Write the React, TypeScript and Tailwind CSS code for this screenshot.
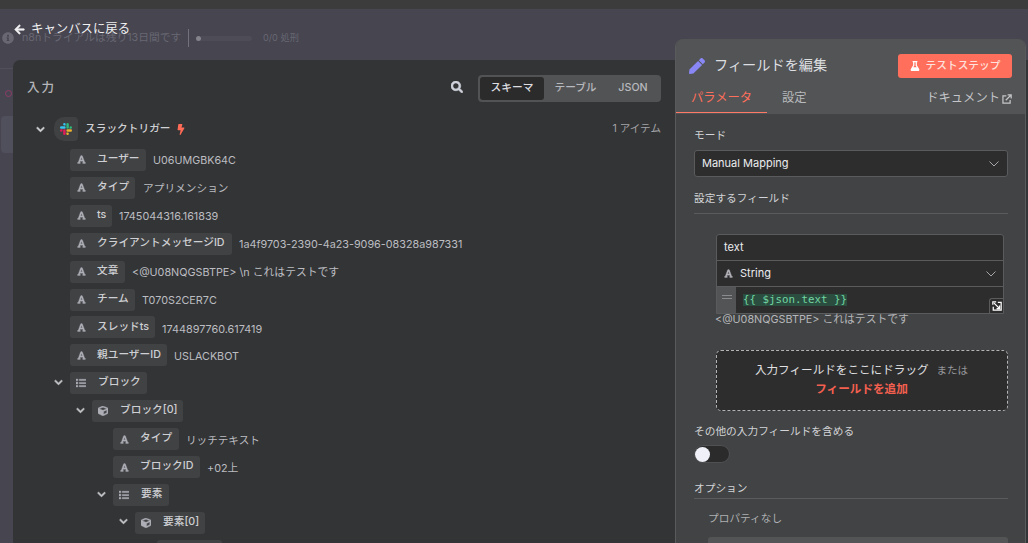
import { useState } from "react";
import {
  FaArrowLeft,
  FaBolt,
  FaChevronDown,
  FaCube,
  FaFlask,
  FaFont,
  FaInfoCircle,
  FaList,
  FaPen,
  FaSearch,
} from "react-icons/fa";

type Kind = "string" | "list" | "object";

interface SchemaRow {
  kind: Kind;
  label: string;
  value?: string;
  indent: string;
  chip: string;
  text?: string;
}

const icons = { string: FaFont, list: FaList, object: FaCube };

const rows: SchemaRow[] = [
  { kind: "string", label: "ユーザー", value: "U06UMGBK64C", indent: "pl-[57px]", chip: "w-[76px]", text: "text-[10.75px]" },
  { kind: "string", label: "タイプ", value: "アプリメンション", indent: "pl-[57px]", chip: "w-[65px]", text: "text-[10.7px] ml-px" },
  { kind: "string", label: "ts", value: "1745044316.161839", indent: "pl-[57px]", chip: "w-[42px]", text: "text-[10.8px]" },
  { kind: "string", label: "クライアントメッセージID", value: "1a4f9703-2390-4a23-9096-08328a987331", indent: "pl-[57px]", chip: "w-[162px]", text: "text-[10.8px]" },
  { kind: "string", label: "文章", value: "<@U08NQGSBTPE> \\n これはテストです", indent: "pl-[57px]", chip: "w-[55px]", text: "text-[10.8px]" },
  { kind: "string", label: "チーム", value: "T070S2CER7C", indent: "pl-[57px]", chip: "w-[65px]", text: "text-[10.8px]" },
  { kind: "string", label: "スレッドts", value: "1744897760.617419", indent: "pl-[57px]", chip: "w-[85px]", text: "text-[10.85px]" },
  { kind: "string", label: "親ユーザーID", value: "USLACKBOT", indent: "pl-[57px]", chip: "w-[97px]", text: "text-[10.75px]" },
  { kind: "list", label: "ブロック", indent: "pl-[41px]", chip: "w-[77px]" },
  { kind: "object", label: "ブロック[0]", indent: "pl-[63px]", chip: "w-[91px]" },
  { kind: "string", label: "タイプ", value: "リッチテキスト", indent: "pl-[100px]", chip: "w-[66px]", text: "text-[10.6px]" },
  { kind: "string", label: "ブロックID", value: "+02上", indent: "pl-[100px]", chip: "w-[87px]", text: "text-[10.8px]" },
  { kind: "list", label: "要素", indent: "pl-[84px]", chip: "w-[56px]" },
  { kind: "object", label: "要素[0]", indent: "pl-[106px]", chip: "w-[70px]" },
  { kind: "string", label: "", indent: "pl-[144px]", chip: "w-[65px]" },
];

const SchemaItem = ({ row }: { row: SchemaRow }) => {
  const Icon = icons[row.kind];
  return (
    <div className={`flex h-[27.93px] shrink-0 items-center ${row.indent}`}>
      {row.kind !== "string" && (
        <FaChevronDown
          strokeWidth={35}
          className="mr-[7px] mb-[2px] size-[9px] shrink-0 text-[#c4c5c9]"
        />
      )}
      <div
        className={`flex h-[22px] shrink-0 items-center rounded-[3px] bg-[#414244] pl-[6px] ${row.chip}`}
      >
        <Icon
          strokeWidth={18}
          className={`shrink-0 text-[#adaeb6] ${
            row.kind === "string" ? "mx-[0.5px] size-[9px]" : "size-[10px]"
          }`}
        />
        <span
          className={`pb-[1px] text-[10.7px] leading-none font-medium text-[#cfd0d3] ${
            row.kind === "string" ? "ml-[11px]" : "ml-[12px]"
          }`}
        >
          {row.label}
        </span>
      </div>
      {row.value && (
        <span className={`pt-[3px] pl-[7px] text-[#bcbdc2] ${row.text}`}>{row.value}</span>
      )}
    </div>
  );
};

const Backdrop = () => (
  <>
    <div className="absolute top-[29px] left-[2px] flex h-[18px] items-center text-[#686772]">
      <FaInfoCircle className="size-[12px]" />
      <span className="ml-[8px] w-[159px] text-[10.75px]">n8nトライアルは残り13日間です</span>
      <span className="ml-[7px] h-[18px] w-px bg-[#73727c]" />
      <span className="ml-[7px] size-[5px] rounded-full bg-[#85848d]" />
      <span className="h-[5px] w-[51px] rounded-r-full bg-[#4d4c57]" />
      <span className="ml-[11px] text-[9.2px]">0/0 処刑</span>
    </div>
    <div className="absolute top-[68px] left-0 h-px w-[13px] bg-[#514f5b]" />
    <div className="absolute top-[90px] left-[5px] size-[7px] rounded-full border border-[#8e3c68]" />
    <div className="absolute top-[116px] left-[1px] h-[37px] w-[12px] rounded-l-[4px] bg-[#504f5c]" />
  </>
);

const SlackIcon = () => (
  <svg viewBox="0 0 24 24" className="size-[12px]">
    <path fill="#36c5f0" d="M8.8 0a2.5 2.5 0 1 0 0 5h2.5V2.5A2.5 2.5 0 0 0 8.8 0zM8.8 6.3H2.5a2.5 2.5 0 0 0 0 5h6.3a2.5 2.5 0 0 0 0-5z" />
    <path fill="#2eb67d" d="M24 8.8a2.5 2.5 0 0 0-5 0v2.5h2.5A2.5 2.5 0 0 0 24 8.8zM17.7 8.8V2.5a2.5 2.5 0 0 0-5 0v6.3a2.5 2.5 0 0 0 5 0z" />
    <path fill="#ecb22e" d="M15.2 24a2.5 2.5 0 0 0 0-5h-2.5v2.5a2.5 2.5 0 0 0 2.5 2.5zM15.2 17.7h6.3a2.5 2.5 0 0 0 0-5h-6.3a2.5 2.5 0 0 0 0 5z" />
    <path fill="#e01e5a" d="M0 15.2a2.5 2.5 0 0 0 5 0v-2.5H2.5A2.5 2.5 0 0 0 0 15.2zM6.3 15.2v6.3a2.5 2.5 0 0 0 5 0v-6.3a2.5 2.5 0 0 0-5 0z" />
  </svg>
);

const ExternalIcon = () => (
  <svg
    viewBox="0 0 16 16"
    className="mt-px size-[10px]"
    fill="none"
    stroke="currentColor"
    strokeWidth="2"
  >
    <path d="M7 3H1.500v11.500H13V9.500M9 1.300h5.700V7M14.500 1.500L6 10" />
  </svg>
);

const ExpandIcon = () => (
  <svg viewBox="0 0 12 12" className="size-[10px]" fill="none" stroke="#fff" strokeWidth="1.5">
    <path d="M2.500 2.500l6 6M1 4.500V1h4M5.500 9h3.500V5.500M7 1.500h4v9.500H1.500V7" />
  </svg>
);

const SelectArrow = () => (
  <svg viewBox="0 0 12 12" className="ml-auto size-[12px]" fill="none" stroke="#a5a6aa">
    <path d="M1.500 3.500L6 8l4.500-4.500" />
  </svg>
);

const InputPanel = () => {
  const [view, setView] = useState("スキーマ");
  const views = [
    { name: "スキーマ", width: "w-[64px]" },
    { name: "テーブル", width: "w-[63px]" },
    { name: "JSON", width: "w-[52px]" },
  ];

  return (
    <section className="mt-[20px] flex h-[483px] w-[663px] shrink-0 flex-col overflow-hidden rounded-tl-[7px] bg-[#333435]">
      <div className="flex h-[55px] shrink-0 items-center pt-px pr-[15px] pl-[14px]">
        <h2 className="text-[12.5px] font-medium tracking-[2px] text-[#b5b6ba]">入力</h2>
        <FaSearch
          strokeWidth={25}
          className="mr-[15px] mb-[2px] ml-auto size-[12px] text-[#d0d3db]"
        />
        <div className="flex h-[27px] w-[183px] items-center rounded-[4px] bg-[#525355] px-[2px]">
          {views.map(({ name, width }) => (
            <button
              key={name}
              onClick={() => setView(name)}
              className={`h-[23px] rounded-[3px] text-[10.7px] font-medium ${width} ${
                view === name ? "bg-[#2b2b2c] text-[#dedee1]" : "text-[#b8b9bd]"
              }`}
            >
              {name}
            </button>
          ))}
        </div>
      </div>
      <div className="flex h-[31px] shrink-0 items-center pr-[15px] pb-[3px] pl-[23px]">
        <FaChevronDown strokeWidth={35} className="size-[9px] text-[#d3d4d8]" />
        <div className="ml-[9px] flex size-[24px] items-center justify-center rounded-[4px] rounded-l-[10px] bg-[#404142]">
          <SlackIcon />
        </div>
        <span className="ml-[7px] text-[10.7px] font-medium text-[#d0d1d4]">スラックトリガー</span>
        <FaBolt className="ml-[6px] h-[11px] w-[8px] text-[#ff6b57]" />
        <span className="ml-auto text-[10.6px] text-[#a3a4a8]">1 アイテム</span>
      </div>
      {rows.map((row, index) => (
        <SchemaItem key={`row-${index}`} row={row} />
      ))}
    </section>
  );
};

const FieldPanel = () => {
  const [isOn, setIsOn] = useState(false);

  return (
    <section className="-mt-px flex h-[505px] w-[351px] shrink-0 flex-col overflow-hidden rounded-t-[8px] border-x border-[#585a5c] bg-[#414344] text-[#d3d4d7]">
      <div className="flex h-[75px] shrink-0 flex-col bg-[#525455]">
        <div className="flex h-[51px] items-center px-[13px] pt-[3px]">
          <FaPen className="size-[16px] text-[#8987f5]" />
          <h1 className="ml-[9px] pb-[3px] text-[14.2px] text-[#dddee0]">フィールドを編集</h1>
          <button className="ml-auto flex h-[24px] w-[114px] items-center justify-center gap-[6px] rounded-[3px] bg-[#ff6f5c] text-[10.7px] font-medium text-[#ffe2dd]">
            <FaFlask className="size-[10px] text-white" />
            テストステップ
          </button>
        </div>
        <div className="flex h-[24px] text-[12.3px]">
          <span className="flex h-[23px] w-[91px] justify-center border-b border-[#ff7a66] leading-[16px] text-[#ff6f5c]">
            パラメータ
          </span>
          <span className="ml-[15px] leading-[16px] text-[#b8b9bc]">設定</span>
          <span className="mr-[13px] ml-auto flex h-[16px] items-center gap-[2px] text-[#c4c5c8]">
            ドキュメント
            <ExternalIcon />
          </span>
        </div>
      </div>
      <div className="flex flex-col pr-[17px] pl-[18px] text-[10.7px]">
        <label className="mt-[13px] h-[16px] leading-[18px]">モード</label>
        <div className="mt-[7px] flex h-[27px] items-center rounded-[3px] border border-[#5a5b5d] bg-[#2d2d2e] pr-[7px] pl-[7px] text-[11px] text-[#ececee]">
          Manual Mapping
          <SelectArrow />
        </div>
        <div className="mt-[12px] h-[25px] border-b border-[#595b5d] leading-[19px]">
          設定するフィールド
        </div>
        <div className="mt-[20px] mr-[4px] ml-[22px] flex h-[80px] flex-col rounded-t-[3px] border border-[#5a5b5d] bg-[#2d2d2e] text-[11px] text-[#ececee]">
          <div className="flex h-[26px] items-center border-b border-[#5a5b5d] pl-[7px]">text</div>
          <div className="flex h-[26px] items-center border-b border-[#5a5b5d] pr-[6px] pl-[7px]">
            <FaFont strokeWidth={18} className="mr-[7px] size-[9px] text-[#b2b3b8]" />
            String
            <SelectArrow />
          </div>
          <div className="flex h-[26px]">
            <div className="flex w-[19px] flex-col items-center gap-[2px] bg-[#525455] pt-[8px]">
              <span className="h-px w-[10px] bg-[#8a8b8e]" />
              <span className="h-px w-[10px] bg-[#8a8b8e]" />
            </div>
            <code className="mt-[7px] ml-[7px] h-[12px] bg-[#2b4d40] font-['DejaVu_Sans_Mono',monospace] text-[10.8px] leading-[12px] text-[#72d5a0]">
              {"{{ $json.text }}"}
            </code>
            <div className="mt-auto ml-auto flex h-[15px] w-[14px] items-center justify-center rounded-tl-[3px] border-t border-l border-[#5a5b5d]">
              <ExpandIcon />
            </div>
          </div>
        </div>
        <p className="ml-[21px] h-[13px] text-[10.8px] leading-[11px] text-[#b5b6b9]">
          &lt;@U08NQGSBTPE&gt; これはテストです
        </p>
        <div className="mt-[23px] ml-[22px] flex h-[61px] flex-col items-center rounded-[5px] border border-dashed border-[#b3b4b6] bg-[#2d2d2e] pt-[10px] pr-px">
          <div className="flex h-[19px] items-center gap-[8px] text-[11.6px] text-[#e1e1e3]">
            入力フィールドをここにドラッグ
            <span className="text-[10.5px] text-[#97989b]">または</span>
          </div>
          <button className="h-[19px] text-[11.6px] leading-[19px] font-bold text-[#f4604f]">
            フィールドを追加
          </button>
        </div>
        <label className="mt-[12px] h-[16px] leading-[18px]">その他の入力フィールドを含める</label>
        <button
          onClick={() => setIsOn((state) => !state)}
          className={`mt-[6px] flex h-[18px] w-[36px] items-center rounded-full border border-[#4f5052] bg-[#2b2b2c] ${
            isOn ? "justify-end" : ""
          }`}
        >
          <span className="size-[15px] rounded-full bg-[#f0f1f8]" />
        </button>
        <div className="mt-[17px] h-[19px] border-b border-[#595b5d] leading-[18px]">オプション</div>
        <p className="mt-[11px] ml-[14px] h-[16px] leading-[18px] text-[#aeafb2]">
          プロパティなし
        </p>
        <div className="mt-[11px] ml-[14px] h-[30px] rounded-[3px] bg-[#525455]" />
      </div>
    </section>
  );
};

const App = () => {
  return (
    <div className="relative h-[543px] w-[1028px] overflow-hidden bg-[#464550] font-['Inter','Noto_Sans_CJK_JP',sans-serif] whitespace-nowrap">
      <Backdrop />
      <div className="h-[9px] bg-[#3c3c3c]" />
      <div className="relative flex h-[31px] items-center gap-[6px] pt-[10px] pl-[14px] text-[12.4px] text-[#f0f0f2]">
        <FaArrowLeft strokeWidth={25} className="size-[11px]" />
        キャンバスに戻る
      </div>
      <main className="relative flex items-start pl-[13px]">
        <InputPanel />
        <div className="-ml-px">
          <FieldPanel />
        </div>
        <div className="mt-[20px] h-[483px] grow bg-[#333435]" />
      </main>
    </div>
  );
};

export default App;
